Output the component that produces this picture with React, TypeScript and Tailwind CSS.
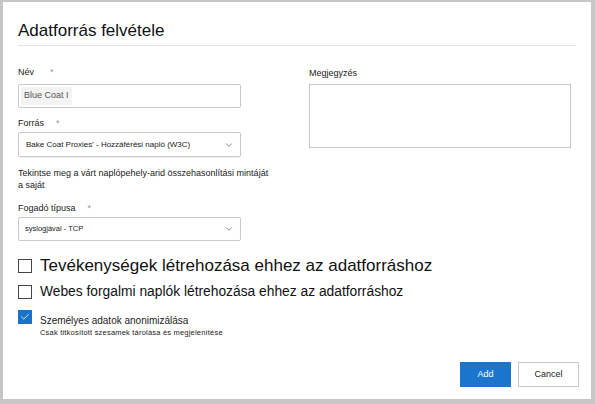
import { ChevronDown, Check } from 'lucide-react';

export default function App() {
    return (
        <div className="w-[595px] h-[404px] bg-[#c6c6c6] pl-[3px] pt-[2px] pr-[4px] pb-[5px] font-['Liberation_Sans',Arial,sans-serif]">
            <div className="w-full h-full bg-white flex flex-col px-[15px]">
                {/* Header */}
                <h1 className="pt-[19px] pb-[4px] text-[17px] leading-[20px] text-[#111] border-b border-[#e3e3e3]">Adatforrás felvétele</h1>

                <div className="flex gap-[68px] pt-[20px]">
                    {/* Left column */}
                    <div className="w-[223px] flex flex-col">
                        <label className="text-[9px] leading-[12px] text-[#222] flex gap-[16px]">
                            Név <span className="text-[#999]">*</span>
                        </label>
                        <div className="mt-[6px] h-[24px] border border-[#c8c8c8] rounded-[2px] flex items-center px-[2px]">
                            <span className="bg-[#f3f3f3] px-[3px] py-[2px] text-[9px] text-[#555]">Blue Coat I</span>
                        </div>

                        <label className="mt-[9px] text-[9px] leading-[12px] text-[#222] flex gap-[12px]">
                            Forrás <span className="text-[#999]">*</span>
                        </label>
                        <div className="mt-[3px] h-[25px] border border-[#c8c8c8] rounded-[2px] flex items-center justify-between pl-[7px] pr-[6px] shadow-[0_1px_1px_rgba(0,0,0,0.05)]">
                            <span className="text-[8px] text-[#222]">Bake Coat Proxies' - Hozzáférési napló (W3C)</span>
                            <ChevronDown className="w-[10px] h-[10px] text-[#777]" strokeWidth={2} />
                        </div>

                        <p className="mt-[10px] w-[256px] text-[9px] leading-[12px] text-[#222]">
                            Tekintse meg a várt naplópehely-arid összehasonlítási mintáját a saját
                        </p>

                        <label className="mt-[11px] text-[9px] leading-[12px] text-[#222] flex gap-[12px]">
                            Fogadó típusa <span className="text-[#999]">*</span>
                        </label>
                        <div className="mt-[3px] h-[24px] border border-[#c8c8c8] rounded-[2px] flex items-center justify-between pl-[6px] pr-[6px]">
                            <span className="text-[7.5px] text-[#222]">syslogjával - TCP</span>
                            <ChevronDown className="w-[10px] h-[10px] text-[#777]" strokeWidth={2} />
                        </div>
                    </div>

                    {/* Right column */}
                    <div className="flex flex-col pt-[1px]">
                        <label className="text-[9px] leading-[12px] text-[#222]">Megjegyzés</label>
                        <div className="mt-[5px] w-[262px] h-[64px] border border-[#c8c8c8]" />
                    </div>
                </div>

                {/* Checkboxes */}
                <div className="mt-[16px] flex items-center gap-[8px]">
                    <div className="w-[14px] h-[14px] border border-[#444]" />
                    <span className="text-[17px] leading-[18px] text-[#111]">Tevékenységek létrehozása ehhez az adatforráshoz</span>
                </div>
                <div className="mt-[9px] flex items-center gap-[8px]">
                    <div className="w-[14px] h-[14px] border border-[#444]" />
                    <span className="text-[13.8px] leading-[16px] text-[#111]">Webes forgalmi naplók létrehozása ehhez az adatforráshoz</span>
                </div>
                <div className="mt-[10px] flex items-start gap-[8px]">
                    <div className="w-[14px] h-[14px] bg-[#1a73c9] flex items-center justify-center">
                        <Check className="w-[10px] h-[10px] text-white" strokeWidth={2} />
                    </div>
                    <div className="flex flex-col pt-[5px]">
                        <span className="text-[10px] leading-[12px] text-[#222]">Személyes adatok anonimizálása</span>
                        <span className="text-[7.5px] leading-[11px] text-[#222] tracking-[0.2px]">Csak titkosított szesamek tárolása és megjelenítése</span>
                    </div>
                </div>

                {/* Footer */}
                <div className="mt-auto mb-[12px] flex justify-end gap-[7px] -mr-[3px]">
                    <button className="w-[51px] h-[25px] bg-[#1b75cc] text-white text-[9px]">Add</button>
                    <button className="w-[61px] h-[25px] border border-[#c8c8c8] bg-white text-[#222] text-[9px]">Cancel</button>
                </div>
            </div>
        </div>
    );
}
